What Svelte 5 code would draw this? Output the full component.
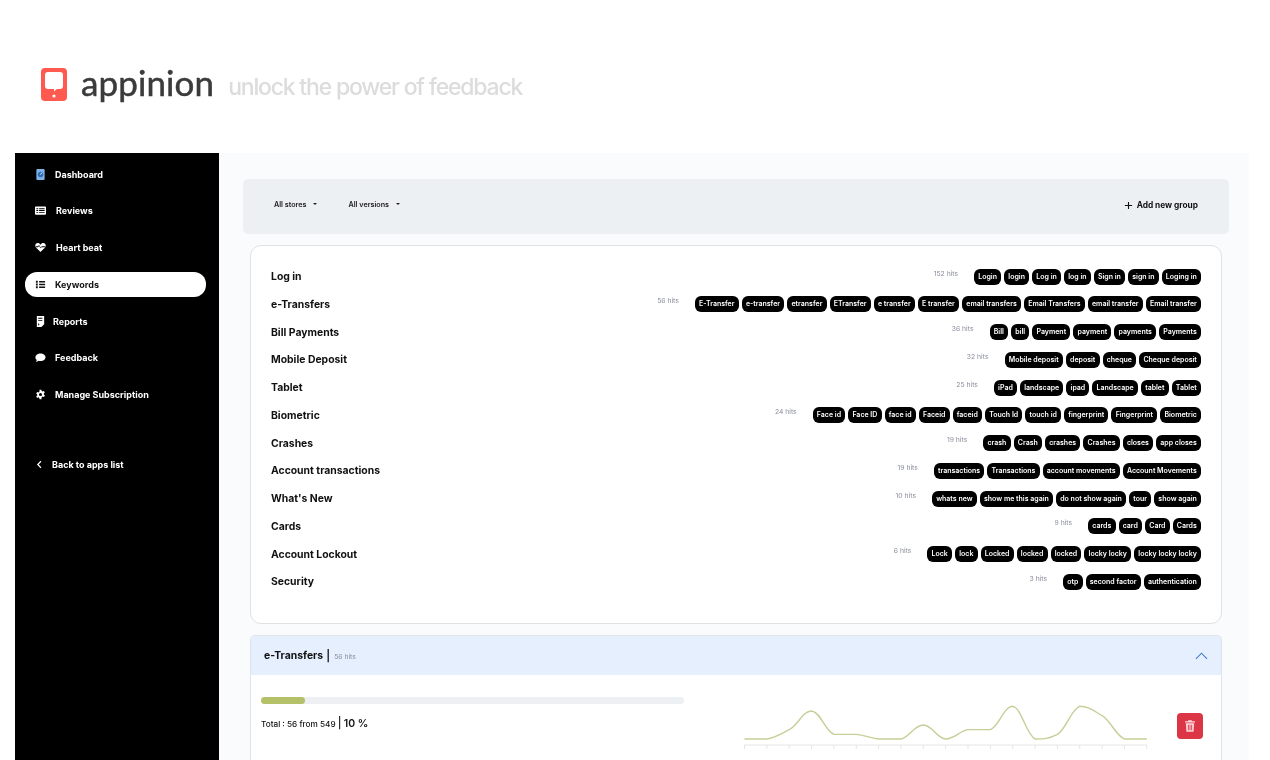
<script>
  const nav = [
    { label: 'Dashboard', icon: 'dash' },
    { label: 'Reviews', icon: 'reviews', wide: true },
    { label: 'Heart beat', icon: 'heart', wide: true },
    { label: 'Keywords', icon: 'list', active: true },
    { label: 'Reports', icon: 'report', tight: true },
    { label: 'Feedback', icon: 'chat' },
    { label: 'Manage Subscription', icon: 'gear' }
  ];

  const groups = [
    { name: 'Log in', hits: 152, tags: ['Login', 'login', 'Log in', 'log in', 'Sign in', 'sign in', 'Loging in'] },
    { name: 'e-Transfers', hits: 56, tags: ['E-Transfer', 'e-transfer', 'etransfer', 'ETransfer', 'e transfer', 'E transfer', 'email transfers', 'Email Transfers', 'email transfer', 'Email transfer'] },
    { name: 'Bill Payments', hits: 36, tags: ['Bill', 'bill', 'Payment', 'payment', 'payments', 'Payments'] },
    { name: 'Mobile Deposit', hits: 32, tags: ['Mobile deposit', 'deposit', 'cheque', 'Cheque deposit'] },
    { name: 'Tablet', hits: 25, tags: ['iPad', 'landscape', 'ipad', 'Landscape', 'tablet', 'Tablet'] },
    { name: 'Biometric', hits: 24, tags: ['Face id', 'Face ID', 'face id', 'Faceid', 'faceid', 'Touch Id', 'touch id', 'fingerprint', 'Fingerprint', 'Biometric'] },
    { name: 'Crashes', hits: 19, tags: ['crash', 'Crash', 'crashes', 'Crashes', 'closes', 'app closes'] },
    { name: 'Account transactions', hits: 19, tags: ['transactions', 'Transactions', 'account movements', 'Account Movements'] },
    { name: "What's New", hits: 10, tags: ['whats new', 'show me this again', 'do not show again', 'tour', 'show again'] },
    { name: 'Cards', hits: 9, tags: ['cards', 'card', 'Card', 'Cards'] },
    { name: 'Account Lockout', hits: 6, tags: ['Lock', 'lock', 'Locked', 'locked', 'locked', 'locky locky', 'locky locky locky'] },
    { name: 'Security', hits: 3, tags: ['otp', 'second factor', 'authentication'] }
  ];

  // daily hits for the selected group
  const series = [0, 0, 2, 6, 1, 1, 0, 0, 3, 0, 2, 2, 7, 0, 1, 7, 5, 0, 0];
  const stepX = 22.35;
  const unit = 4.67;
  const base = 34;
  const pts = series.map((v, i) => [i * stepX + 0.5, base - v * unit]);

  function smooth(p) {
    let d = `M${p[0][0]} ${p[0][1]}`;
    for (let i = 0; i < p.length - 1; i++) {
      const a = p[Math.max(i - 1, 0)];
      const b = p[i];
      const c = p[i + 1];
      const e = p[Math.min(i + 2, p.length - 1)];
      const t = 0.16;
      const y1 = Math.min(Math.max(b[1] + (c[1] - a[1]) * t, Math.min(b[1], c[1])), Math.max(b[1], c[1]));
      const y2 = Math.min(Math.max(c[1] - (e[1] - b[1]) * t, Math.min(b[1], c[1])), Math.max(b[1], c[1]));
      d += ` C${b[0] + stepX * 0.4} ${y1} ${c[0] - stepX * 0.4} ${y2} ${c[0]} ${c[1]}`;
    }
    return d;
  }
  const line = smooth(pts);
</script>

<div class="page">
  <header class="top">
    <svg class="logo" viewBox="0 0 26 33" width="26" height="33">
      <rect width="26" height="33" rx="4" fill="#ff5a4f" />
      <path d="M7 4h12a3 3 0 0 1 3 3v11a3 3 0 0 1-3 3h-3l-3 2.500v-2.500H7a3 3 0 0 1-3-3V7a3 3 0 0 1 3-3z" fill="#fff" />
      <circle cx="13" cy="28" r="1.600" fill="#fff" />
    </svg>
    <span class="brand">appinion</span>
    <span class="tagline">unlock the power of feedback</span>
  </header>

  <div class="shell">
    <aside class="side">
      <nav>
        {#each nav as item}
          <a class="item" class:active={item.active} class:tight={item.tight} class:wide={item.wide} href="#top">
            <svg class="ico" viewBox="0 0 12 12" width="11" height="11">
              {#if item.icon === 'dash'}
                <rect x="1.500" width="9" height="12" rx="1" fill="#7fb2ea" />
                <circle cx="6" cy="6" r="3" fill="#2f6fb5" />
                <path d="M6 6l1.500-2" stroke="#fff" stroke-width="1" />
              {:else if item.icon === 'reviews'}
                <path fill-rule="evenodd" fill="#fff" d="M1 1.500h10a1 1 0 0 1 1 1v7a1 1 0 0 1-1 1H1a1 1 0 0 1-1-1v-7a1 1 0 0 1 1-1zM1.500 3.500v1h2v-1zm3 0v1h6v-1zm-3 2v1h2v-1zm3 0v1h6v-1zm-3 2v1h2v-1zm3 0v1h6v-1z" />
              {:else if item.icon === 'heart'}
                <path fill-rule="evenodd" fill="#fff" d="M6 11L1 6C-.5 4 .5 1.200 3 1.200c1.300 0 2.300.7 3 1.800.7-1.100 1.700-1.800 3-1.800 2.500 0 3.500 2.800 2 4.800zM1 5.600h2.400l1-1.400 1.500 2.600 1-1.200H11v-.9H7.500l-1.400 1.300-1.600-2.700-1.500 1.400H1z" />
              {:else if item.icon === 'list'}
                <path fill="#111" d="M1 2h2v2H1zM4.500 2.300H11v1.400H4.500zM1 5h2v2H1zM4.500 5.300H11v1.400H4.500zM1 8h2v2H1zM4.500 8.300H11v1.400H4.500z" />
              {:else if item.icon === 'report'}
                <path fill-rule="evenodd" fill="#fff" d="M2 0h8v9l-3 3H2zM3.500 2v1H8V2zM3.500 4.500v1H8v-1zM3.500 8v2.500L5 9z" />
              {:else if item.icon === 'chat'}
                <path fill="#fff" d="M6 1.500c3 0 5.500 1.800 5.500 4.200S9 9.900 6 9.900c-.8 0-1.500-.1-2.200-.3-.8.7-1.900 1-3 1 .7-.7 1.100-1.400 1.200-2.100C1 8.700.5 7.300.5 5.700.5 3.300 3 1.500 6 1.500z" />
              {:else}
                <path fill-rule="evenodd" fill="#fff" d="M5 .8h2l.3 1.500 1 .5 1.400-.6 1 1.700-1.100 1 .1 1.100 1.100 1-1 1.700-1.400-.6-1 .6L7 11.200H5l-.3-1.500-1-.6-1.400.6-1-1.700 1.100-1V5.900l-1.100-1 1-1.700 1.400.6 1-.5zM6 4.300a1.700 1.700 0 1 0 0 3.400 1.700 1.700 0 0 0 0-3.400z" />
              {/if}
            </svg>
            <span>{item.label}</span>
          </a>
        {/each}
        <a class="item back" href="#top">
          <svg class="ico" viewBox="0 0 12 12" width="11" height="11">
            <path d="M6.500 2.500L3 6l3.500 3.500" fill="none" stroke="#fff" stroke-width="1.300" />
          </svg>
          <span>Back to apps list</span>
        </a>
      </nav>
    </aside>

    <main class="main">
      <div class="toolbar">
        <button class="drop">All stores<i class="caret"></i></button>
        <button class="drop versions">All versions<i class="caret"></i></button>
        <button class="add">
          <svg viewBox="0 0 10 10" width="9" height="9"><path d="M5 1v8M1 5h8" stroke="#111" stroke-width="1.200" /></svg>
          Add new group
        </button>
      </div>

      <section class="groups">
        {#each groups as g}
          <div class="row">
            <h4>{g.name}</h4>
            <small>{g.hits} hits</small>
            <div class="tags">
              {#each g.tags as t}
                <span class="tag">{t}</span>
              {/each}
            </div>
          </div>
        {/each}
      </section>

      <section class="acc">
        <div class="acc-head">
          <strong>e-Transfers</strong>
          <b>|</b>
          <small>56 hits</small>
          <svg class="chev" viewBox="0 0 14 8" width="13" height="8">
            <path d="M1 7l6-6 6 6" fill="none" stroke="#3f78c9" stroke-width="1.100" />
          </svg>
        </div>
        <div class="acc-body">
          <div class="stats">
            <div class="bar"><div class="fill" style="width: 10.4%"></div></div>
            <p>Total : 56 from 549 <span class="sep">|</span> <span class="pct">10 %</span></p>
          </div>
          <svg class="chart" viewBox="0 0 404 46" width="404" height="46">
            <path d={line} fill="none" stroke="#c5cf97" stroke-width="1.400" />
            <path d="M0 40H403" stroke="#e6e6e6" stroke-width="1" />
            {#each series as _, i}
              <path d="M{i * stepX + 0.5} 40v4" stroke="#e6e6e6" stroke-width="1" />
            {/each}
          </svg>
          <button class="del" aria-label="Delete">
            <svg viewBox="0 0 12 14" width="10" height="12">
              <path fill="#fbd5da" fill-rule="evenodd" d="M4 0h4l.6 1.200H12v1.500H0V1.200h3.400zM1 3.700h10l-.7 10.300H1.700zM3.500 5.500v6.500h1V5.500zM5.500 5.500v6.500h1V5.500zM7.500 5.500v6.500h1V5.500z" />
            </svg>
          </button>
        </div>
      </section>
    </main>
  </div>
</div>

<style>
  :global(body) {
    margin: 0;
    background: #fff;
  }
  .page {
    height: 760px;
    overflow: hidden;
    will-change: transform;
    font-family: 'Inter', 'Liberation Sans', sans-serif;
    color: #111;
  }

  .top {
    height: 153px;
    box-sizing: border-box;
    padding: 68px 0 0 41px;
    display: flex;
    align-items: flex-start;
  }
  .brand {
    margin-left: 14px;
    margin-top: -2px;
    font-family: 'Lato', sans-serif;
    font-size: 35px;
    line-height: 32px;
    letter-spacing: 0.1px;
    -webkit-text-stroke: 0.5px #3b3b3b;
    color: #3b3b3b;
  }
  .tagline {
    margin-left: 14px;
    margin-top: 3px;
    font-size: 23px;
    line-height: 32px;
    font-weight: 500;
    letter-spacing: -1.2px;
    color: #dcdcdc;
  }

  .shell {
    display: flex;
    margin: 0 21px 0 15px;
    height: 607px;
  }
  .side {
    width: 204px;
    flex: none;
    background: #000;
    padding: 8.5px 13px 0 10px;
    box-sizing: border-box;
  }
  .item {
    display: flex;
    align-items: center;
    gap: 9px;
    height: 25px;
    margin-bottom: 11.8px;
    padding-left: 10px;
    border-radius: 12px;
    color: #fff;
    font-size: 9px;
    font-weight: 700;
    text-decoration: none;
  }
  .item.active {
    background: #fff;
    color: #111;
  }
  .item.tight {
    gap: 7px;
  }
  .item.wide {
    gap: 10px;
  }
  .item.back {
    margin-top: 45px;
    gap: 6px;
  }
  .ico {
    flex: none;
  }

  .main {
    flex: 1;
    min-width: 0;
    background: #f9fbfd;
    padding: 26px 20px 0 24px;
  }
  .toolbar {
    height: 55px;
    background: #ecf0f3;
    border-radius: 5px;
    display: flex;
    align-items: center;
    padding: 0 31px 3px 31px;
    box-sizing: border-box;
  }
  button {
    border: none;
    background: none;
    padding: 0;
    font-family: inherit;
    color: #222;
  }
  .drop {
    font-size: 7.2px;
    font-weight: 600;
    display: flex;
    align-items: center;
    margin-bottom: 2px;
  }
  .versions {
    margin-left: 32px;
  }
  .caret {
    width: 0;
    height: 0;
    margin-left: 6px;
    margin-bottom: 1px;
    border-left: 2.2px solid transparent;
    border-right: 2.2px solid transparent;
    border-top: 2.2px solid #222;
  }
  .versions .caret {
    margin-left: 7px;
  }
  .add {
    margin-left: auto;
    display: flex;
    align-items: center;
    gap: 4px;
    font-size: 8.300px;
    font-weight: 700;
    color: #111;
  }

  .groups {
    margin: 11px 7px 0;
    height: 379px;
    box-sizing: border-box;
    background: #fff;
    border: 1px solid #dfe1e3;
    border-radius: 11px;
    padding: 16.7px 20px 0 20px;
  }
  .row {
    display: flex;
    align-items: center;
    height: 27.75px;
  }
  h4 {
    margin: 0 auto 0 0;
    font-size: 10.400px;
    font-weight: 700;
  }
  .row small {
    font-size: 6.800px;
    color: #8a8e9c;
    margin: 0 16px 7px 0;
  }
  .tags {
    display: flex;
    gap: 3px;
  }
  .tag {
    background: #000;
    color: #fff;
    font-size: 7px;
    font-weight: 600;
    height: 16px;
    line-height: 16px;
    padding: 0 4.2px;
    border-radius: 6px;
  }

  .acc {
    margin: 11px 7px 0;
    background: #fff;
    border: 1px solid #dfe4ea;
    border-bottom: none;
    border-radius: 5px 5px 0 0;
    height: 200px;
  }
  .acc-head {
    height: 39px;
    background: #e5effd;
    display: flex;
    align-items: center;
    padding: 0 13px;
    gap: 3px;
    border-radius: 4px 4px 0 0;
  }
  .acc-head strong {
    font-size: 10.400px;
    font-weight: 700;
  }
  .acc-head b {
    font-size: 11px;
    font-weight: 600;
  }
  .acc-head small {
    font-size: 6.800px;
    color: #8a8e9c;
    margin: 2px 0 0 1px;
  }
  .chev {
    margin-left: auto;
  }
  .acc-body {
    display: flex;
    align-items: flex-start;
    padding: 22px 18px 0 10px;
  }
  .stats {
    width: 423px;
    flex: none;
  }
  .bar {
    height: 7px;
    background: #ecf0f3;
    border-radius: 4px;
  }
  .fill {
    height: 100%;
    background: #b5c168;
    border-radius: 4px;
  }
  .stats p {
    margin: 11px 0 0;
    font-size: 8.200px;
    line-height: 16px;
    font-weight: 500;
  }
  .sep {
    font-size: 11px;
  }
  .pct {
    font-size: 10.500px;
    font-weight: 600;
  }
  .chart {
    flex: none;
    margin: 8px 0 0 60px;
  }
  .del {
    width: 26px;
    height: 26px;
    margin: 16px 0 0 auto;
    background: #dc3545;
    border-radius: 4px;
    display: flex;
    align-items: center;
    justify-content: center;
  }
</style>
